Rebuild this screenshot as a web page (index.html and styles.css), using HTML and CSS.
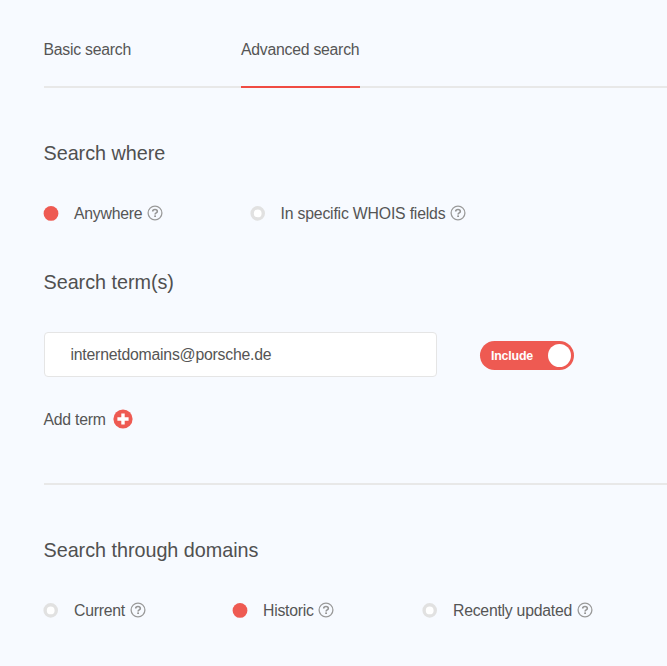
FILE: index.html
```html
<!DOCTYPE html>
<html lang="en">
<head>
<meta charset="utf-8">
<title>Advanced search</title>
<link rel="stylesheet" href="styles.css">
</head>
<body>
<svg width="0" height="0" class="defs" aria-hidden="true">
  <symbol id="help" viewBox="0 0 16 16">
    <circle cx="8" cy="8" r="6.9" fill="none" stroke="#9a9a9a" stroke-width="1.3"/>
    <path d="M5.7 6.5C5.7 5.1 6.6 4.5 8 4.5s2.3.7 2.3 1.9c0 1.6-2.2 1.4-2.2 3" fill="none" stroke="#959595" stroke-width="1.6"/>
    <rect x="7.2" y="10.4" width="1.8" height="1.6" fill="#959595"/>
  </symbol>
  <symbol id="radio-on" viewBox="0 0 16 16"><circle cx="8" cy="8.4" r="7.4" fill="#ee5a52"/></symbol>
  <symbol id="radio-off" viewBox="0 0 16 16"><circle cx="7.7" cy="8.4" r="5.6" fill="#fff" stroke="#e1e1e1" stroke-width="3.4"/></symbol>
</svg>
<main class="panel">
  <nav class="tabs">
    <a class="tab">Basic search</a>
    <a class="tab active">Advanced search</a>
  </nav>
  <h2 class="where-title">Search where</h2>
  <div class="options where">
    <label class="option"><svg class="radio"><use href="#radio-on"/></svg><span>Anywhere</span><svg class="help"><use href="#help"/></svg></label>
    <label class="option"><svg class="radio"><use href="#radio-off"/></svg><span class="loose">In specific WHOIS fields</span><svg class="help"><use href="#help"/></svg></label>
  </div>
  <h2 class="terms-title">Search term(s)</h2>
  <div class="term-row">
    <div class="field">internetdomains@porsche.de</div>
    <div class="toggle"><span>Include</span><i class="knob"></i></div>
  </div>
  <div class="add"><span>Add term</span><svg class="plus" viewBox="0 0 20 20"><circle cx="10" cy="10" r="9.6" fill="#ee5a52"/><path d="M10 4.4v11.2M4.4 10h11.2" stroke="#fff" stroke-width="3.4"/></svg></div>
  <hr class="divider">
  <h2 class="domains-title">Search through domains</h2>
  <div class="options domains">
    <label class="option"><svg class="radio"><use href="#radio-off"/></svg><span>Current</span><svg class="help"><use href="#help"/></svg></label>
    <label class="option"><svg class="radio"><use href="#radio-on"/></svg><span>Historic</span><svg class="help"><use href="#help"/></svg></label>
    <label class="option"><svg class="radio"><use href="#radio-off"/></svg><span>Recently updated</span><svg class="help"><use href="#help"/></svg></label>
  </div>
</main>
</body>
</html>
```
FILE: styles.css
```css
* { box-sizing: border-box; }
body {
  margin: 0;
  background: #f7faff;
  color: #555;
  font: 15.8px/20px "Liberation Sans", Arial, sans-serif;
  letter-spacing: -0.25px;
  overflow: hidden;
}
.defs { display: block; }
.panel { height: 666px; padding: 39px 0 0 43.5px; }
.tabs {
  display: grid;
  grid-template-columns: 197.5px max-content;
  height: 49px;
  background: linear-gradient(#e8e8e8, #e8e8e8) 0 47px / 100% 2px no-repeat;
}
.tab { padding-top: 1px; }
.tab.active { width: 119px; height: 49px; border-bottom: 2px solid #f04b43; }
h2 {
  margin: 0;
  color: #505050;
  font-size: 19.8px;
  font-weight: 400;
  letter-spacing: -0.03px;
  line-height: 24px;
}
.where-title { margin-top: 53px; }
.options { display: grid; align-items: center; height: 22px; margin-top: 37px; }
.where { grid-template-columns: 206.5px max-content; }
.domains { grid-template-columns: 189px 190px max-content; }
.option { display: flex; align-items: center; white-space: nowrap; }
.option span, .add span { padding-top: 2px; }
.loose { letter-spacing: -0.19px; }
.radio { width: 16px; height: 16px; margin: 0 15px 0 -0.5px; }
.help { width: 16px; height: 16px; margin-left: 4.6px; }
.terms-title { margin-top: 46px; }
.term-row { display: flex; align-items: center; margin-top: 38px; }
.field {
  width: 393px;
  height: 45px;
  padding: 0 26px;
  border: 1.5px solid #e5e5e5;
  border-radius: 4px;
  background: #fff;
  letter-spacing: -0.22px;
  line-height: 43px;
}
.toggle {
  display: flex;
  align-items: center;
  justify-content: space-between;
  width: 94px;
  height: 29px;
  margin: 2px 0 0 43.5px;
  padding: 0 3px 0 11px;
  border-radius: 15px;
  background: #ee5a52;
  color: #fff;
  font-size: 12.4px;
  font-weight: 700;
  letter-spacing: -0.2px;
}
.knob { width: 23px; height: 23px; border-radius: 50%; background: #fff; }
.add { display: flex; align-items: center; height: 22px; margin-top: 31px; }
.plus { width: 20px; height: 20px; margin-left: 7.4px; }
.divider { height: 2px; margin: 53px 0 0; border: 0; background: #e8e8e8; }
.domains-title { margin-top: 53px; }
```
